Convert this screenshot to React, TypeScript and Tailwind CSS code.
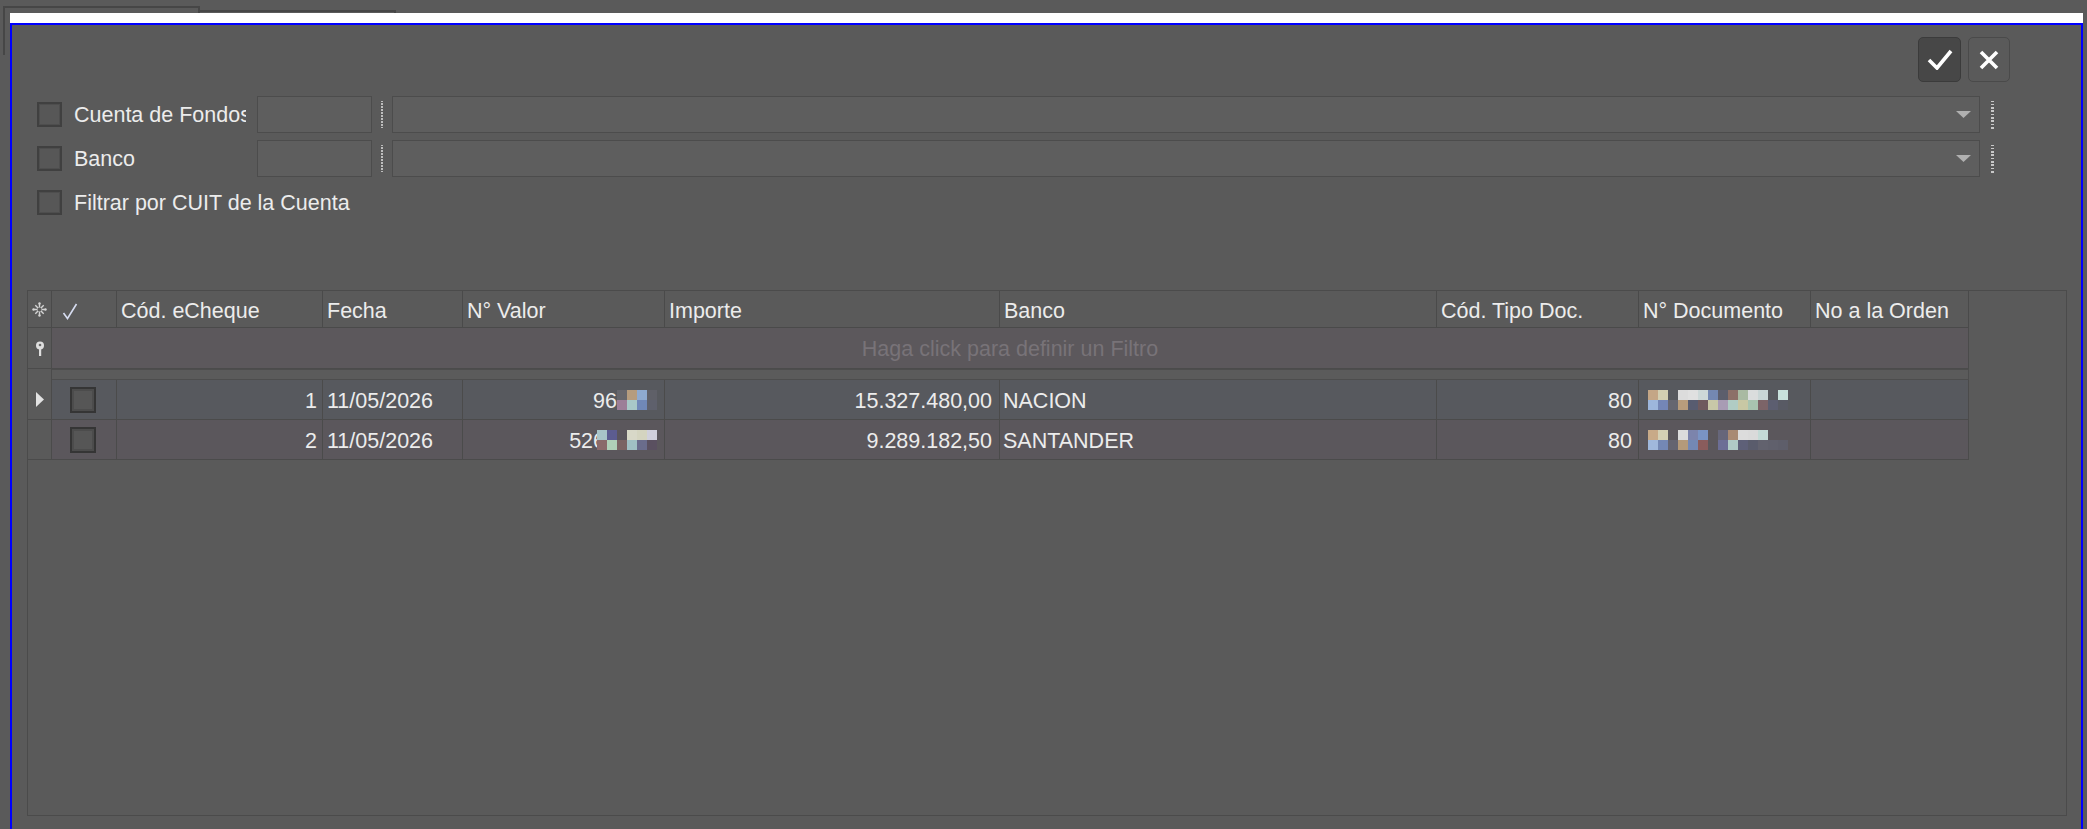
import React, { FC } from 'react'

type Cell = string | null

const GRID_COLS =
    'grid grid-cols-[24px_65px_206px_140px_202px_335px_437px_202px_172px_158px]'

// mosaic blocks used to mask account numbers
const valorMask: Cell[][][] = [
    [
        ['#66666c', '#b59c7e', '#8eaad0', '#5f6068'],
        ['#9c7e98', '#a8c8c8', '#7088b8', '#5e606c'],
    ],
    [
        ['#a8c4c8', '#5c5c90', '#5a545c', '#d8d8c8', '#d4d4c0', '#d0d0dc'],
        ['#8a6a6a', '#b0d0b8', '#7a6464', '#a0c0c4', '#6a6c8c', '#5a5060'],
    ],
]

const docMask: Cell[][][] = [
    [
        ['#c4a686', '#d3cfb2', null, '#dcdcdc', '#e0e0e0', '#cdd8d8', '#7488b2', '#5c5e6c', '#8c7068', '#a9baa2', '#dadddd', '#c9d6d6', null, '#c8e2dc'],
        ['#9db6dc', '#7486b6', '#666670', '#b89c7c', '#585c70', '#6e5a5e', '#c8c8a8', '#a89cb4', '#b0ccc4', '#c8c8a4', '#a8c4b0', '#7c6468', '#5c5e70', '#585a64'],
    ],
    [
        ['#c8aa88', '#d4d0b4', null, '#dcdcdc', '#7c84ac', '#7a94c4', null, '#66667a', '#a88a74', '#dcdcdc', '#dadada', '#c4dad6', null, null],
        ['#a0b8dc', '#7488b4', '#646470', '#b49a7a', '#7488b4', '#8a5c5c', null, '#6c6e96', '#b0cac6', '#5e6078', '#5a5c6c', '#62626e', '#60606c', '#5e5e6a'],
    ],
]

const rows = [
    { cod: '1', fecha: '11/05/2026', valor: '96', importe: '15.327.480,00', banco: 'NACION', tipo: '80', bg: 'bg-[#57595e]' },
    { cod: '2', fecha: '11/05/2026', valor: '526', importe: '9.289.182,50', banco: 'SANTANDER', tipo: '80', bg: 'bg-[#5b575c]' },
]

const Mosaic: FC<{ blocks: Cell[][] }> = ({ blocks }) => (
    <div className="flex flex-col">
        {blocks.map((line, i) => (
            <div key={i} className="flex">
                {line.map((c, j) => (
                    <div key={j} className="h-[10px] w-[10px]" style={{ backgroundColor: c ?? 'transparent' }} />
                ))}
            </div>
        ))}
    </div>
)

const CheckBox: FC<{ small?: boolean }> = ({ small }) => (
    <div
        className={
            small
                ? 'h-[26px] w-[26px] border-2 border-[#353535] bg-[#565656] shadow-[inset_0_0_0_2px_#4c4c4c]'
                : 'h-[25px] w-[25px] shrink-0 border-2 border-[#404040] bg-[#575757] shadow-[inset_0_0_0_1px_#4e4e4e]'
        }
    />
)

const Grip: FC = () => (
    <div className="ml-[11px] flex h-[28px] flex-col justify-between">
        {Array.from({ length: 9 }).map((_, i) => (
            <div key={i} className="h-[1.5px] w-[3px] bg-[#c8c8c8]" />
        ))}
    </div>
)

const Dots: FC = () => (
    <div className="mx-[9px] flex h-[28px] flex-col justify-between">
        {Array.from({ length: 10 }).map((_, i) => (
            <div key={i} className="h-[1.5px] w-[1.5px] bg-[#bdbdbd]" />
        ))}
    </div>
)

const LookupRow: FC<{ label: string }> = ({ label }) => (
    <div className="flex h-[37px] items-center">
        <CheckBox />
        <div className="ml-[12px] mr-[11px] w-[172px] overflow-hidden whitespace-nowrap leading-[30px]">{label}</div>
        <div className="h-[37px] w-[115px] border border-[#4c4c4c] bg-[#5e5e5e]" />
        <Dots />
        <div className="flex h-[37px] w-[1588px] items-center justify-end border border-[#4c4c4c] bg-[#5e5e5e] pr-[8px]">
            <svg width="15" height="7" viewBox="0 0 15 7">
                <path d="M0 0 H15 L7.5 7 Z" fill="#b0b0b0" />
            </svg>
        </div>
        <Grip />
    </div>
)

const Snowflake: FC = () => (
    <svg width="15" height="15" viewBox="0 0 15 15" stroke="#d4d4d4" strokeWidth="1.4" fill="#d4d4d4">
        <path d="M7.5 1.5 V13.5 M1.5 7.5 H13.5 M3.3 3.3 L11.7 11.7 M11.7 3.3 L3.3 11.7" />
        <circle cx="7.5" cy="1.5" r="1.2" stroke="none" />
        <circle cx="7.5" cy="13.5" r="1.2" stroke="none" />
        <circle cx="1.5" cy="7.5" r="1.2" stroke="none" />
        <circle cx="13.5" cy="7.5" r="1.2" stroke="none" />
        <circle cx="7.5" cy="7.5" r="2" fill="#5a5a5a" stroke="none" />
    </svg>
)

const Pin: FC = () => (
    <svg width="10" height="15" viewBox="0 0 10 15">
        <circle cx="5" cy="4.5" r="4" fill="#dedede" />
        <circle cx="5" cy="4" r="1.3" fill="#6a6a6a" />
        <rect x="4" y="8" width="2.2" height="7" fill="#dedede" />
    </svg>
)

export default function App() {
    const hdr = 'flex items-center border-r border-b border-[#4a4a4a] pl-[4px] pt-[5px] whitespace-nowrap'
    const cell = 'flex items-center border-r border-b border-[#4b4b4b] whitespace-nowrap'
    const txt = 'pt-[4px]'

    return (
        <div className="h-[829px] w-[2087px] overflow-hidden bg-[#5a5a5a] font-['Liberation_Sans',Arial,sans-serif] text-[21.5px] leading-none text-[#ececec]">
            {/* tab strip */}
            <div className="flex h-[13px] pl-[3px] pt-[6px]">
                <div className="h-[7px] w-[197px] border-x-2 border-t-2 border-[#464646]" />
                <div className="mt-[4px] h-[3px] w-[196px] border-r-2 border-t-2 border-[#464646]" />
            </div>

            <div className="flex">
                <div className="w-[10px] shrink-0">
                    <div className="ml-[3px] h-[42px] border-l-2 border-[#464646]" />
                </div>

                <div className="w-[2073px]">
                    <div className="h-[10px] bg-white" />
                    <div className="h-[806px] border-2 border-b-0 border-[#0000ff] bg-[#5a5a5a]">
                        {/* confirm / cancel */}
                        <div className="flex justify-end gap-[7px] pr-[71px] pt-[12px]">
                            <button className="flex h-[45px] w-[43px] items-center justify-center rounded-[5px] border border-[#3b3b3b] bg-[#474747]">
                                <svg width="26" height="21" viewBox="0 0 26 21">
                                    <path d="M2 11 L10 19 L24 2" fill="none" stroke="#fff" strokeWidth="3.6" />
                                </svg>
                            </button>
                            <button className="flex h-[45px] w-[42px] items-center justify-center rounded-[5px] border border-[#4a4a4a] bg-[#5a5a5a]">
                                <svg width="20" height="20" viewBox="0 0 20 20">
                                    <path d="M2 2 L18 18 M18 2 L2 18" fill="none" stroke="#fff" strokeWidth="3.6" />
                                </svg>
                            </button>
                        </div>

                        {/* filters */}
                        <div className="mt-[14px] flex flex-col gap-[7px] pl-[25px]">
                            <LookupRow label="Cuenta de Fondos" />
                            <LookupRow label="Banco" />
                            <div className="flex h-[37px] items-center">
                                <CheckBox />
                                <div className="ml-[12px] whitespace-nowrap leading-[30px]">Filtrar por CUIT de la Cuenta</div>
                            </div>
                        </div>

                        {/* cheques grid */}
                        <div className="ml-[15px] mt-[69px] h-[526px] w-[2040px] border border-[#4b4b4b]">
                            <div className={`${GRID_COLS} h-[37px]`}>
                                <div className="flex items-center justify-center border-r border-b border-[#4a4a4a]">
                                    <Snowflake />
                                </div>
                                <div className={`${hdr} pl-[10px]`}>
                                    <svg width="16" height="17" viewBox="0 0 16 17">
                                        <path d="M1.5 10 L5.5 15.5 L14.5 1" fill="none" stroke="#d6dcf0" strokeWidth="1.6" />
                                    </svg>
                                </div>
                                <div className={hdr}>Cód. eCheque</div>
                                <div className={hdr}>Fecha</div>
                                <div className={hdr}>N° Valor</div>
                                <div className={hdr}>Importe</div>
                                <div className={hdr}>Banco</div>
                                <div className={hdr}>Cód. Tipo Doc.</div>
                                <div className={hdr}>N° Documento</div>
                                <div className={hdr}>No a la Orden</div>
                            </div>

                            {/* filter row */}
                            <div className="flex h-[41px]">
                                <div className="flex w-[24px] items-center justify-center border-r border-b border-[#4b4b4b]">
                                    <Pin />
                                </div>
                                <div className="flex w-[1917px] items-center justify-center border-r border-b border-[#4b4b4b] bg-[#5c585c] pt-[4px] text-[#787378]">
                                    Haga click para definir un Filtro
                                </div>
                            </div>

                            <div className="flex h-[11px]">
                                <div className="w-[24px] border-r border-[#4b4b4b]" />
                                <div className="w-[1917px] border-r border-b border-t border-[#4d4d4d] bg-[#5b5b5b]" />
                            </div>

                            {rows.map((r, i) => (
                                <div key={r.cod} className={`${GRID_COLS} h-[40px]`}>
                                    <div className="flex items-center justify-center border-r border-b border-[#4b4b4b]">
                                        {i === 0 && (
                                            <svg width="8" height="15" viewBox="0 0 8 15">
                                                <path d="M0 0 L8 7.5 L0 15 Z" fill="#e2e2e2" />
                                            </svg>
                                        )}
                                    </div>
                                    <div className={`${cell} ${r.bg} justify-center pr-[2px]`}>
                                        <CheckBox small />
                                    </div>
                                    <div className={`${cell} ${r.bg} ${txt} justify-end pr-[5px]`}>{r.cod}</div>
                                    <div className={`${cell} ${r.bg} ${txt} pl-[4px]`}>{r.fecha}</div>
                                    <div className={`${cell} ${r.bg} justify-end pr-[7px]`}>
                                        <span className={txt}>{r.valor}</span>
                                        <div className={i === 0 ? '' : '-ml-[8px]'}>
                                            <Mosaic blocks={valorMask[i]} />
                                        </div>
                                    </div>
                                    <div className={`${cell} ${r.bg} ${txt} justify-end pr-[7px]`}>{r.importe}</div>
                                    <div className={`${cell} ${r.bg} ${txt} pl-[3px]`}>{r.banco}</div>
                                    <div className={`${cell} ${r.bg} ${txt} justify-end pr-[6px]`}>{r.tipo}</div>
                                    <div className={`${cell} ${r.bg} pl-[9px]`}>
                                        <Mosaic blocks={docMask[i]} />
                                    </div>
                                    <div className={`${cell} ${r.bg}`} />
                                </div>
                            ))}
                        </div>
                    </div>
                </div>
            </div>
        </div>
    )
}
